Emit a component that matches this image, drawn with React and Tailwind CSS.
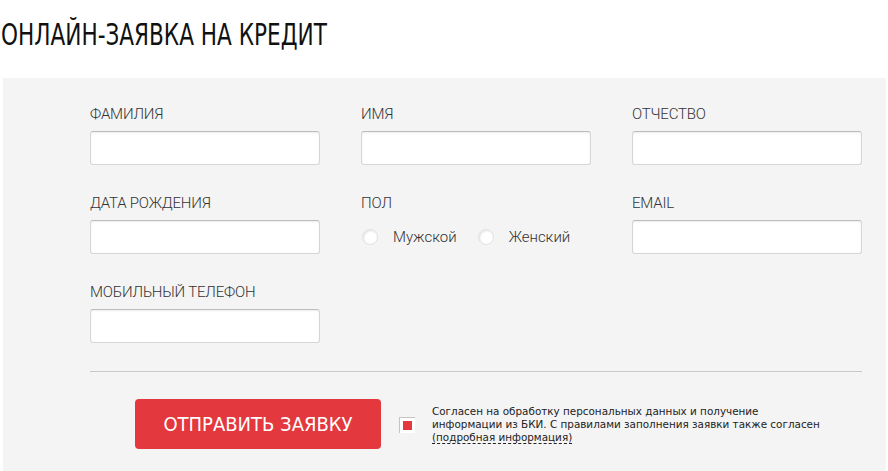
import { useState } from 'react'

const cond = { fontFamily: '"Liberation Sans Narrow", "DejaVu Sans Condensed", "Roboto", sans-serif' }

function Field({ label }) {
  return (
    <div className="flex flex-col">
      <label className="text-[15px] leading-[18px] text-[#333] mb-2 font-['Roboto',sans-serif] font-light tracking-[-0.2px]">{label}</label>
      <input
        type="text"
        className="h-[34px] w-[230px] bg-white border border-[#d6d6d6] border-t-[#bcbcbc] rounded-[3px] shadow-[inset_0_1px_2px_rgba(0,0,0,0.08)] outline-none px-2"
      />
    </div>
  )
}

function Radio({ label, checked, onClick }) {
  return (
    <button onClick={onClick} className="flex items-center gap-[15px] cursor-pointer">
      <span className="w-[16px] h-[16px] rounded-full bg-white border border-[#e2e2e2] shadow-[inset_1px_1px_2px_rgba(0,0,0,0.12)] flex items-center justify-center">
        {checked && <span className="w-[7px] h-[7px] rounded-full bg-[#e3383e]" />}
      </span>
      <span className="text-[15px] text-[#333] font-['Roboto',sans-serif] font-light">{label}</span>
    </button>
  )
}

export default function App() {
  const [sex, setSex] = useState(null)
  const [agree, setAgree] = useState(true)

  return (
    <div className="w-[888px] h-[471px] bg-white overflow-hidden">
      <div className="pt-[19px] pl-[1px] h-[78px]">
        <h1 style={cond} className="inline-block origin-left scale-x-[0.8] text-[30px] leading-[32px] text-[#111] font-normal whitespace-nowrap">
          ОНЛАЙН-ЗАЯВКА НА КРЕДИТ
        </h1>
      </div>

      <div className="ml-[3px] mr-[2px] bg-[#f4f4f4] pl-[87px] pr-[21px] pt-[27px] pb-[40px]">
        <div className="grid grid-cols-[230px_230px_230px] gap-x-[41px] gap-y-[29px]">
          <Field label="ФАМИЛИЯ" />
          <Field label="ИМЯ" />
          <Field label="ОТЧЕСТВО" />
          <Field label="ДАТА РОЖДЕНИЯ" />
          <div className="flex flex-col">
            <span className="text-[15px] leading-[18px] text-[#333] mb-2 font-['Roboto',sans-serif] font-light">ПОЛ</span>
            <div className="flex items-center gap-[21px] h-[34px] pl-[1px]">
              <Radio label="Мужской" checked={sex === 'm'} onClick={() => setSex('m')} />
              <Radio label="Женский" checked={sex === 'f'} onClick={() => setSex('f')} />
            </div>
          </div>
          <Field label="EMAIL" />
          <Field label="МОБИЛЬНЫЙ ТЕЛЕФОН" />
        </div>

        <div className="mt-[28px] w-[772px] h-px bg-[#c9c9c9]" />

        <div className="flex items-center mt-[27px] pl-[45px]">
          <button
            style={cond}
            className="w-[246px] h-[50px] rounded-[4px] bg-[#e3383e] text-white text-[20px] font-normal"
          >
            ОТПРАВИТЬ ЗАЯВКУ
          </button>
          <button
            onClick={() => setAgree((v) => !v)}
            className="ml-[18px] w-[16px] h-[16px] bg-white border-t border-l border-[#c4c4c4] flex items-center justify-center mt-[2px]"
          >
            {agree && <span className="w-[9px] h-[9px] bg-[#e3383e]" />}
          </button>
          <p className="ml-[17px] text-[10.4px] leading-[13px] text-[#222] font-['DejaVu_Sans',sans-serif]">
            Согласен на обработку персональных данных и получение
            <br />
            информации из БКИ. С правилами заполнения заявки также согласен
            <br />
            <a href="#" className="border-b border-dashed border-[#222]">(подробная информация)</a>
          </p>
        </div>
      </div>
    </div>
  )
}
